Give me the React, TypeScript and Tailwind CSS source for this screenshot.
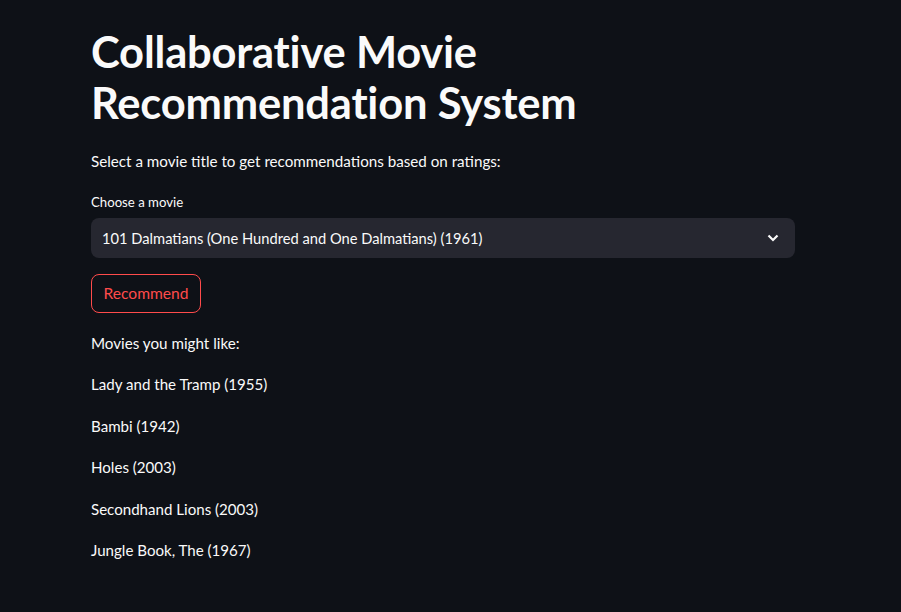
import React from "react";

const movies = [
  "Lady and the Tramp (1955)",
  "Bambi (1942)",
  "Holes (2003)",
  "Secondhand Lions (2003)",
  "Jungle Book, The (1967)",
];

export default function App() {
  return (
    <div
      className="min-h-[612px] w-full bg-[#0e1117] text-[#fafafa]"
      style={{ fontFamily: "Lato, 'Noto Sans', sans-serif" }}
    >
      <div className="ml-[91px] w-[704px] pt-[26px]">
        <h1 className="text-[43.5px] font-bold leading-[51px] tracking-[-0.2px]">
          Collaborative Movie
          <br />
          Recommendation System
        </h1>
        <p className="mt-[21px] text-[15.2px] leading-[24px]">
          Select a movie title to get recommendations based on ratings:
        </p>
        <div className="mt-[19px] text-[13.2px] leading-[21px]">Choose a movie</div>
        <div className="mt-[5px] flex h-[40px] items-center justify-between rounded-[8px] bg-[#262730] pl-[11px] pr-[16px]">
          <span className="text-[14.7px] leading-[24px]">
            101 Dalmatians (One Hundred and One Dalmatians) (1961)
          </span>
          <svg width="12" height="8" viewBox="0 0 12 8">
            <polyline
              points="1.5,1.5 6,6 10.5,1.5"
              fill="none"
              stroke="#fafafa"
              strokeWidth="2.2"
            />
          </svg>
        </div>
        <button className="mt-[16px] flex h-[39px] w-[110px] items-center justify-center rounded-[8px] border border-[#ff4b4b] text-[15.6px] text-[#ff4b4b]">
          Recommend
        </button>
        <p className="mt-[18px] text-[15.2px] leading-[24px]">Movies you might like:</p>
        <div className="mt-[17px] flex flex-col gap-[17.5px]">
          {movies.map((m) => (
            <p key={m} className="text-[15.1px] leading-[24px]">
              {m}
            </p>
          ))}
        </div>
      </div>
    </div>
  );
}
